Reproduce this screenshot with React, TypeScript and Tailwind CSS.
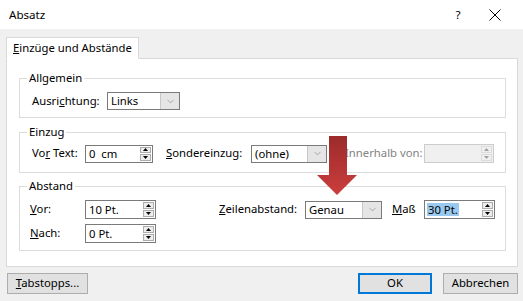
import { ChevronDown } from "lucide-react";

function Chevron() {
  return (
    <div className="flex w-[19px] items-center justify-center border-l border-[#c8c8c8] bg-[#e5e5e5]">
      <ChevronDown size={11} strokeWidth={1} className="text-[#606060]" />
    </div>
  );
}

function Select({ value, className }: { value: string; className: string }) {
  return (
    <div className={`flex h-[18px] border border-[#7a7a7a] bg-white ${className}`}>
      <div className="flex flex-1 items-center pl-[3px] leading-none">{value}</div>
      <Chevron />
    </div>
  );
}

function Spinner({ disabled }: { disabled?: boolean }) {
  const c = disabled ? "#a0a0a0" : "#000";
  return (
    <div className="flex w-[12px] flex-col gap-[1px] py-[1px] pr-[1px]">
      <div className={`flex flex-1 items-center justify-center border ${disabled ? "border-[#dcdcdc] bg-[#f0f0f0]" : "border-[#adadad] bg-[#ededed]"}`}>
        <svg width="5" height="3" viewBox="0 0 5 3">
          <polygon points="2.5,0 5,3 0,3" fill={c} />
        </svg>
      </div>
      <div className={`flex flex-1 items-center justify-center border ${disabled ? "border-[#dcdcdc] bg-[#f0f0f0]" : "border-[#adadad] bg-[#ededed]"}`}>
        <svg width="5" height="3" viewBox="0 0 5 3">
          <polygon points="0,0 5,0 2.5,3" fill={c} />
        </svg>
      </div>
    </div>
  );
}

function Spin({ value, className, selected, disabled }: { value?: string; className: string; selected?: boolean; disabled?: boolean }) {
  return (
    <div className={`flex border ${disabled ? "border-[#cccccc] bg-[#f0f0f0]" : "border-[#7a7a7a] bg-white"} ${className}`}>
      <div className="flex flex-1 items-center whitespace-pre pl-[2px] leading-none">
        {selected ? <span className="bg-[#99c9ef] px-[1px] py-[1px]">{value}</span> : <span className="pl-[1px]">{value}</span>}
      </div>
      <Spinner disabled={disabled} />
    </div>
  );
}

function Group({ title, className, children }: { title: string; className: string; children: React.ReactNode }) {
  return (
    <fieldset className={`w-[487px] border border-[#dcdcdc] ${className}`}>
      <legend className="ml-[7px] px-[2px] leading-[16px]">{title}</legend>
      {children}
    </fieldset>
  );
}

export default function App() {
  return (
    <div className="relative flex h-[301px] w-[523px] flex-col whitespace-nowrap bg-[#f0f0f0] font-['Noto_Sans',sans-serif] text-[11.3px] text-black">
      {/* title bar */}
      <div className="flex h-[29px] items-center bg-white text-[11.6px]">
        <div className="flex-1 pl-[9px]">Absatz</div>
        <div className="w-[18px] text-center">?</div>
        <div className="flex w-[56px] justify-center">
          <svg width="12" height="12" viewBox="0 0 12 12">
            <path d="M0.5 0.5 L11.5 11.5 M11.5 0.5 L0.5 11.5" stroke="#000" strokeWidth="1" />
          </svg>
        </div>
      </div>

      <div className="flex flex-col pl-[6px] pr-[5px] pt-[8px]">
        <div className="-mb-px flex">
          <div className="z-10 flex h-[22px] w-[133px] items-center border border-b-white border-[#d9d9d9] bg-white px-[6px]">
            <span>
              <u>E</u>inzüge und Abstände
            </span>
          </div>
        </div>

        <div className="flex h-[209px] flex-col border border-[#d9d9d9] bg-white pl-[12px] pt-[11px]">
          <Group title="Allgemein" className="h-[48px]">
            <div className="mt-[6px] flex items-center pl-[12px]">
              <span className="w-[75px]">
                Ausri<u>c</u>htung:
              </span>
              <Select value="Links" className="w-[73px]" />
            </div>
          </Group>

          <Group title="Einzug" className="mt-[6px] h-[49px]">
            <div className="mt-[4px] flex items-center pl-[12px]">
              <span className="w-[53px]">
                Vo<u>r</u> Text:
              </span>
              <Spin value="0  cm" className="h-[18px] w-[68px]" />
              <span className="ml-[13px] w-[85px]">
                <u>S</u>ondereinzug:
              </span>
              <Select value="(ohne)" className="w-[76px]" />
              <span className="ml-[18px] w-[79px] text-[#838383]">Innerhalb von:</span>
              <Spin className="h-[19px] w-[70px]" disabled />
            </div>
          </Group>

          <Group title="Abstand" className="mt-[5px] h-[73px]">
            <div className="mt-[6px] flex items-center pl-[10px]">
              <span className="w-[55px]">
                <u>V</u>or:
              </span>
              <Spin value="10 Pt." className="h-[19px] w-[71px]" />
              <span className="ml-[63px] w-[86px]">
                <u>Z</u>eilenabstand:
              </span>
              <Select value="Genau" className="w-[77px]" />
              <span className="ml-[10px] w-[32px]">
                <u>M</u>aß
              </span>
              <Spin value="30 Pt." className="h-[19px] w-[71px]" selected />
            </div>
            <div className="mt-[5px] flex items-center pl-[10px]">
              <span className="w-[55px]">
                <u>N</u>ach:
              </span>
              <Spin value="0 Pt." className="h-[19px] w-[71px]" />
            </div>
          </Group>
        </div>
      </div>

      <div className="mt-[6px] flex pl-[7px] pr-[5px]">
        <button className="h-[21px] w-[81px] border border-[#adadad] bg-[#e1e1e1]">
          <u>T</u>abstopps...
        </button>
        <div className="flex-1" />
        <button className="h-[21px] w-[74px] border-2 border-[#0078d7] bg-[#e1e1e1]">OK</button>
        <button className="ml-[11px] h-[21px] w-[75px] border border-[#adadad] bg-[#e1e1e1]">Abbrechen</button>
      </div>

      {/* red annotation arrow */}
      <svg className="absolute left-[316px] top-[136px]" width="42" height="60" viewBox="0 0 42 60">
        <defs>
          <linearGradient id="arrowGrad" x1="0" y1="0" x2="0" y2="1">
            <stop offset="0" stopColor="#9c2b2b" />
            <stop offset="1" stopColor="#cc3d3d" />
          </linearGradient>
        </defs>
        <polygon points="13,0 31,0 31,39 41,39 21,59 1,39 13,39" fill="url(#arrowGrad)" />
      </svg>
    </div>
  );
}
